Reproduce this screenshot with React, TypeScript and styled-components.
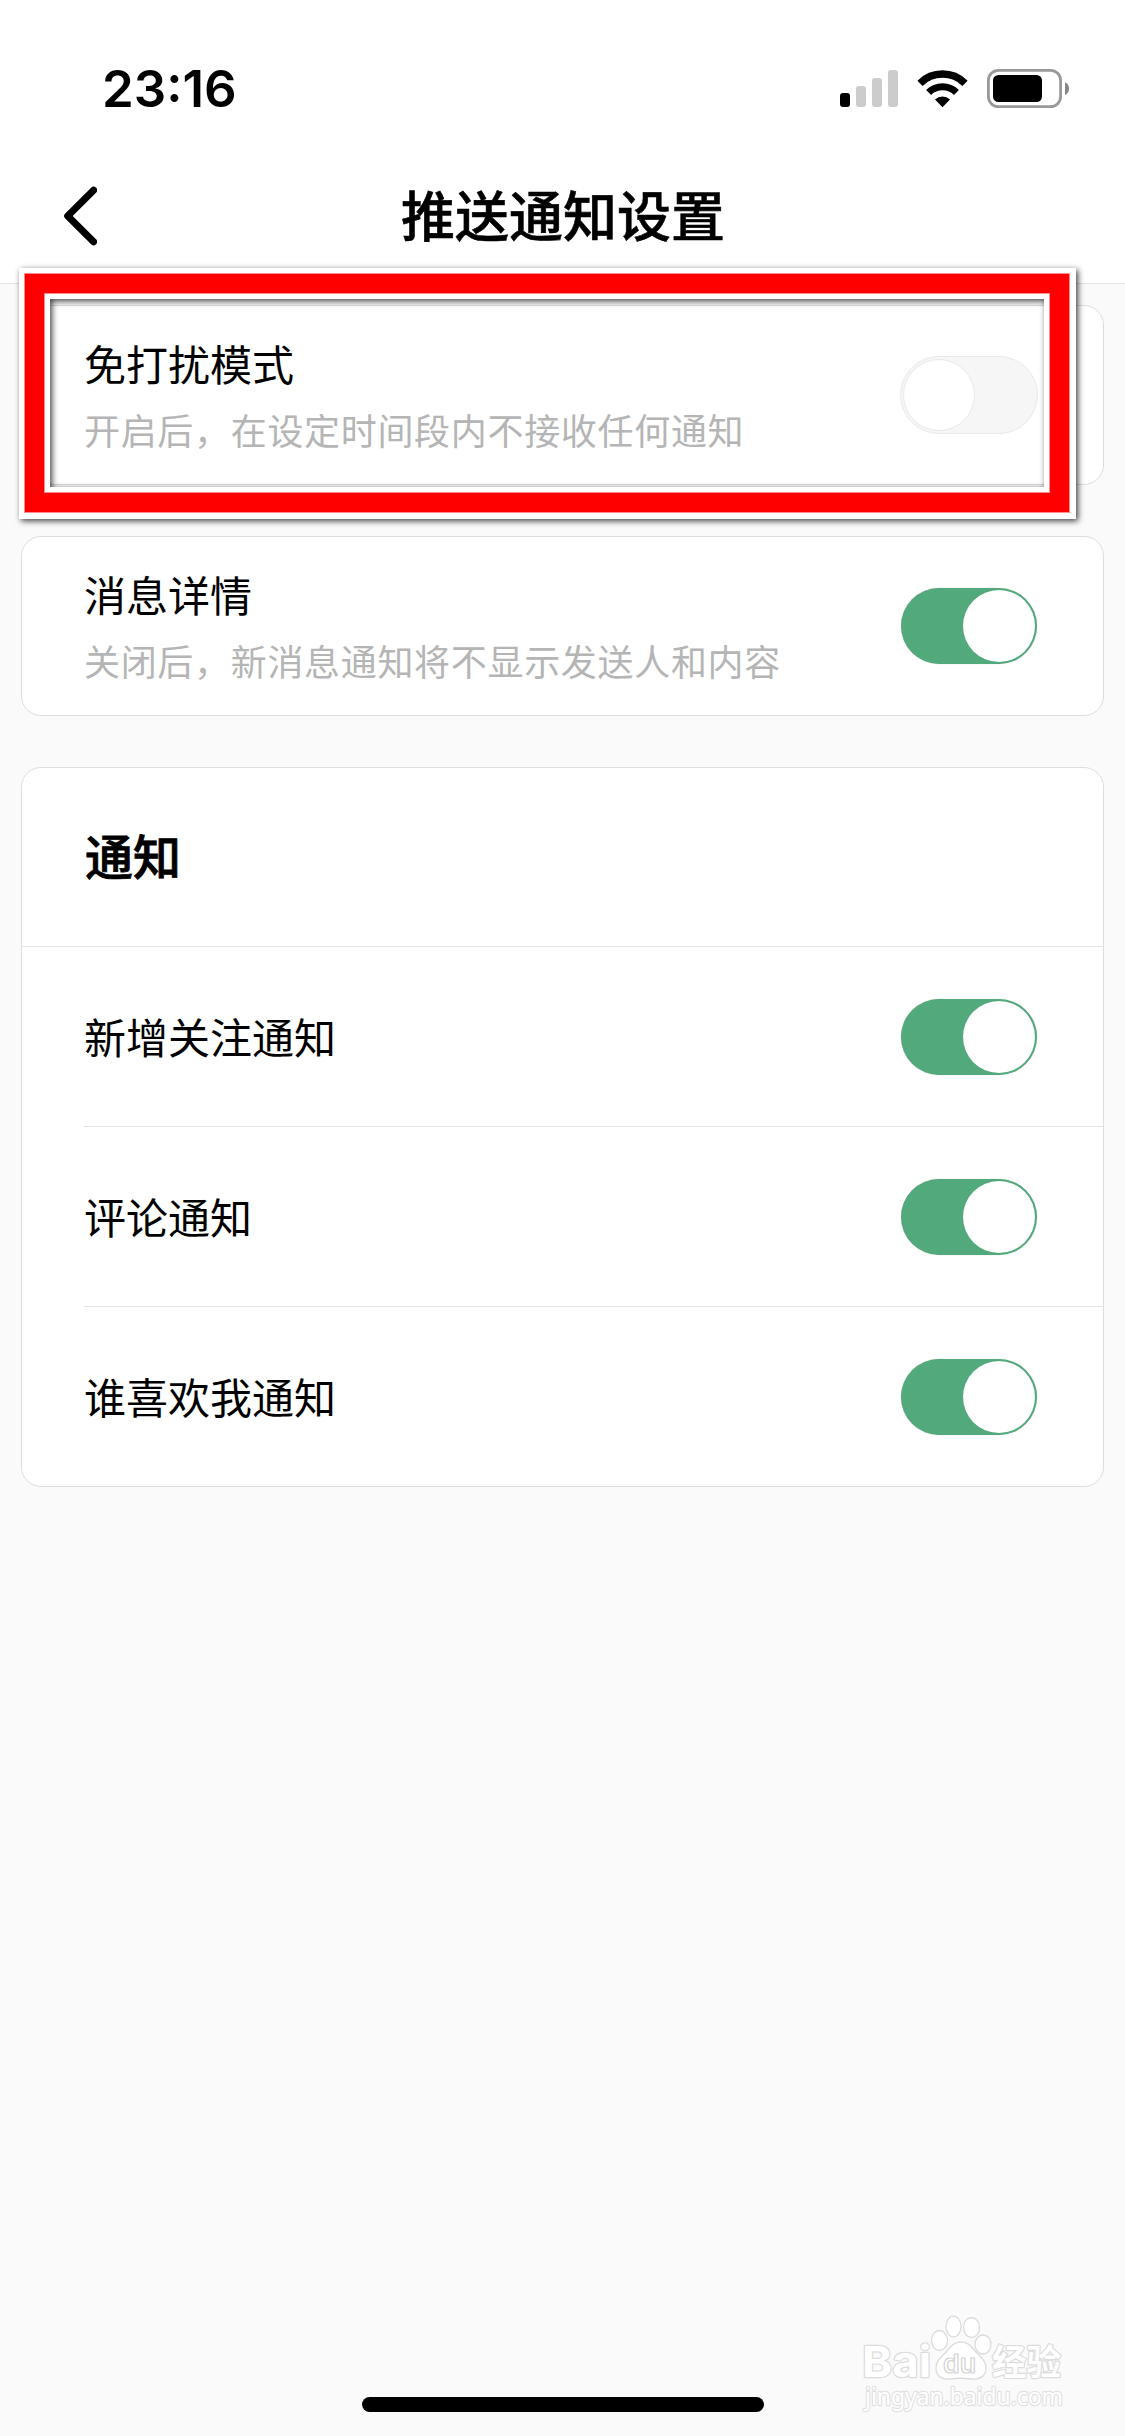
import React from 'react';
import styled, { createGlobalStyle } from 'styled-components';

const GlobalStyle = createGlobalStyle`
  * { box-sizing: border-box; }
  body {
    margin: 0;
    background: #fafafa;
    font-family: 'Noto Sans CJK SC', sans-serif;
    color: #000;
  }
`;

const Screen = styled.div`
  position: relative;
  width: 1125px;
  height: 2436px;
  overflow: hidden;
  display: flex;
  flex-direction: column;
  background: #fafafa;
`;

const Header = styled.header`
  height: 284px;
  flex: none;
  background: #fff;
  border-bottom: 1px solid #e3e3e3;
`;

const StatusBar = styled.div`
  height: 148px;
  padding: 30px 56px 0 102px;
  display: flex;
  justify-content: space-between;
  align-items: center;
`;

const Clock = styled.span`
  font-family: Inter, 'Liberation Sans', sans-serif;
  font-size: 51px;
  font-weight: 600;
  line-height: 60px;
`;

const StatusIcons = styled.svg`
  display: block;
  width: 229px;
  height: 40px;
`;

const NavBar = styled.nav`
  height: 135px;
  padding: 0 64px;
  display: grid;
  grid-template-columns: 33px 1fr 33px;
  align-items: center;
`;

const BackIcon = styled.svg`
  display: block;
  width: 33px;
  height: 60px;
`;

const Title = styled.h1`
  margin: 0;
  padding: 0 0 4px 1px;
  text-align: center;
  font-size: 54px;
  line-height: 72px;
  font-weight: 500;
  -webkit-text-stroke: 0.6px #000;
`;

const Content = styled.main`
  padding: 21px 21px 0;
  display: flex;
  flex-direction: column;
  gap: 51px;
`;

const Card = styled.section`
  background: #fff;
  border: 1px solid #dedede;
  border-radius: 20px;
`;

const DetailRow = styled.div`
  height: 178px;
  padding: 0 66px 0 62px;
  display: flex;
  justify-content: space-between;
  align-items: center;
`;

const TextBlock = styled.div`
  padding-bottom: 1px;
  display: flex;
  flex-direction: column;
`;

const Label = styled.span`
  font-size: 42px;
  line-height: 60px;
`;

const Hint = styled.span`
  margin-top: 9px;
  font-size: 36px;
  letter-spacing: 0.68px;
  line-height: 54px;
  color: #b5b5b5;
`;

const SectionTitle = styled.h2`
  height: 179px;
  margin: 0;
  padding: 0 0 6px 63px;
  display: flex;
  align-items: center;
  font-size: 48px;
  font-weight: 500;
  -webkit-text-stroke: 0.8px #000;
  border-bottom: 1px solid #e3e3e3;
`;

const Row = styled.div`
  height: 180px;
  margin-left: 62px;
  padding: 1px 66px 0 0;
  display: flex;
  justify-content: space-between;
  align-items: center;
  border-bottom: 1px solid #e3e3e3;

  &:last-child { height: 179px; border-bottom: 0; }

  > ${Label} { padding-bottom: 3px; }
`;

const Switch = styled.button<{ $on: boolean }>`
  flex: none;
  width: ${p => (p.$on ? 136 : 138)}px;
  height: ${p => (p.$on ? 76 : 78)}px;
  margin: 0 ${p => (p.$on ? 0 : -1)}px 0 0;
  padding: 0 2px;
  border: ${p => (p.$on ? '0' : '1px solid #e9e9e9')};
  border-radius: 39px;
  display: flex;
  align-items: center;
  justify-content: ${p => (p.$on ? 'flex-end' : 'flex-start')};
  background: ${p => (p.$on ? '#52a97c' : '#f6f6f6')};
  box-shadow: ${p => (p.$on ? '0 0 1px rgba(0, 0, 0, 0.3)' : 'none')};
`;

const Knob = styled.span<{ $on: boolean }>`
  width: 72px;
  height: 72px;
  border-radius: 50%;
  background: #fff;
  border: ${p => (p.$on ? '0' : '1px solid #e9e9e9')};
`;

const FrameOuter = styled.div`
  position: absolute;
  left: 19px;
  top: 268px;
  width: 1057px;
  height: 251px;
  border: solid #fff;
  border-width: 5px 6px 6px 5px;
  box-shadow: 2px 2px 6px rgba(0, 0, 0, 0.75);
  pointer-events: none;
`;

const FrameRed = styled.div`
  height: 100%;
  border: 1px solid #ff8c8c;
  > div { height: 100%; border: 19px solid #f00; }
  > div > div { height: 100%; border: 1px solid #ff8c8c; }
`;

const FrameInner = styled.div`
  height: 100%;
  border: 5px solid #fff;
  > div { height: 100%; box-shadow: inset 2px 2px 6px rgba(0, 0, 0, 0.75); }
`;

const HomeIndicator = styled.div`
  position: absolute;
  left: 362px;
  top: 2397px;
  width: 402px;
  height: 15px;
  border-radius: 8px;
  background: #000;
`;

const Watermark = styled.svg`
  position: absolute;
  left: 850px;
  top: 2305px;
  width: 225px;
  height: 115px;
`;

const Toggle = ({ on }: { on: boolean }) => (
  <Switch $on={on} role="switch" aria-checked={on}>
    <Knob $on={on} />
  </Switch>
);

const details = [
  { label: '免打扰模式', hint: '开启后，在设定时间段内不接收任何通知', on: false },
  { label: '消息详情', hint: '关闭后，新消息通知将不显示发送人和内容', on: true },
];

const notices = ['新增关注通知', '评论通知', '谁喜欢我通知'];

export default function App() {
  return (
    <Screen>
      <GlobalStyle />
      <Header>
        <StatusBar>
          <Clock>23:16</Clock>
          <StatusIcons viewBox="840 69 229 40">
            <rect x="840" y="93" width="10" height="14" rx="3" />
            <g fill="#ccc">
              <rect x="856" y="86" width="10" height="21" rx="3" />
              <rect x="872" y="78" width="10" height="29" rx="3" />
              <rect x="888" y="70" width="10" height="37" rx="3" />
            </g>
            <g fill="none" stroke="#000">
              <path d="M920 83.3A32 32 0 0 1 965 83.3" strokeWidth="7.4" />
              <path d="M928.6 92.4A20 20 0 0 1 956.4 92.4" strokeWidth="7" />
            </g>
            <path d="M935 99.5a11 11 0 0 1 15 0l-7.5 7.7z" />
            <rect x="988.4" y="70.4" width="72.2" height="36.2" rx="10" fill="none" stroke="#999" strokeWidth="2.8" />
            <rect x="993" y="75" width="49" height="27" rx="5.5" />
            <path d="M1065 82.3c5.4 2.4 5.4 10.4 0 12.8z" fill="#888" />
          </StatusIcons>
        </StatusBar>
        <NavBar>
          <BackIcon viewBox="64 185.5 33 60">
            <path d="M93.6 189.8L67.7 215.5L93.6 241.2" fill="none" stroke="#000" strokeWidth="7" strokeLinecap="round" strokeLinejoin="round" />
          </BackIcon>
          <Title>推送通知设置</Title>
        </NavBar>
      </Header>
      <Content>
        {details.map(d => (
          <Card key={d.label}>
            <DetailRow>
              <TextBlock>
                <Label>{d.label}</Label>
                <Hint>{d.hint}</Hint>
              </TextBlock>
              <Toggle on={d.on} />
            </DetailRow>
          </Card>
        ))}
        <Card>
          <SectionTitle>通知</SectionTitle>
          {notices.map(n => (
            <Row key={n}>
              <Label>{n}</Label>
              <Toggle on />
            </Row>
          ))}
        </Card>
      </Content>
      <FrameOuter>
        <FrameRed>
          <div><div><FrameInner><div /></FrameInner></div></div>
        </FrameRed>
      </FrameOuter>
      <Watermark viewBox="850 2305 225 115">
        <g fill="#fff" stroke="#dcdcdc" strokeWidth="2.4" paintOrder="stroke" strokeLinejoin="round">
          <text x="862" y="2377" fontFamily="Inter, sans-serif" fontSize="43" fontWeight="700" textLength="69" lengthAdjust="spacingAndGlyphs">Bai</text>
          <text x="992" y="2375" fontFamily="'Noto Sans CJK SC', sans-serif" fontSize="35" fontWeight="700" textLength="69" lengthAdjust="spacingAndGlyphs">经验</text>
          <text x="865" y="2405" stroke="#e2e2e2" fontFamily="'Noto Sans', sans-serif" fontSize="24" textLength="198" lengthAdjust="spacingAndGlyphs">jingyan.baidu.com</text>
        </g>
        <g fill="#fff" stroke="#dcdcdc" strokeWidth="1.3">
          <ellipse cx="939.5" cy="2340.5" rx="8" ry="10" />
          <ellipse cx="953.5" cy="2326.5" rx="7.5" ry="10.3" />
          <ellipse cx="971.5" cy="2327.5" rx="8" ry="10" />
          <ellipse cx="983" cy="2344.5" rx="8" ry="9.5" />
          <path d="M961 2342c-7 0-10 4-14 9c-5 6-11 9-11 17c0 8 6 12 13 11c8-1 16-1 23 0c8 1 14-3 14-11c0-8-6-11-11-17c-4-5-7-9-14-9z" />
        </g>
        <text x="943" y="2373" fill="#fff" stroke="#d4d4d4" strokeWidth="1.2" fontFamily="Inter, sans-serif" fontSize="26" fontWeight="600" textLength="33" lengthAdjust="spacingAndGlyphs">du</text>
      </Watermark>
      <HomeIndicator />
    </Screen>
  );
}
